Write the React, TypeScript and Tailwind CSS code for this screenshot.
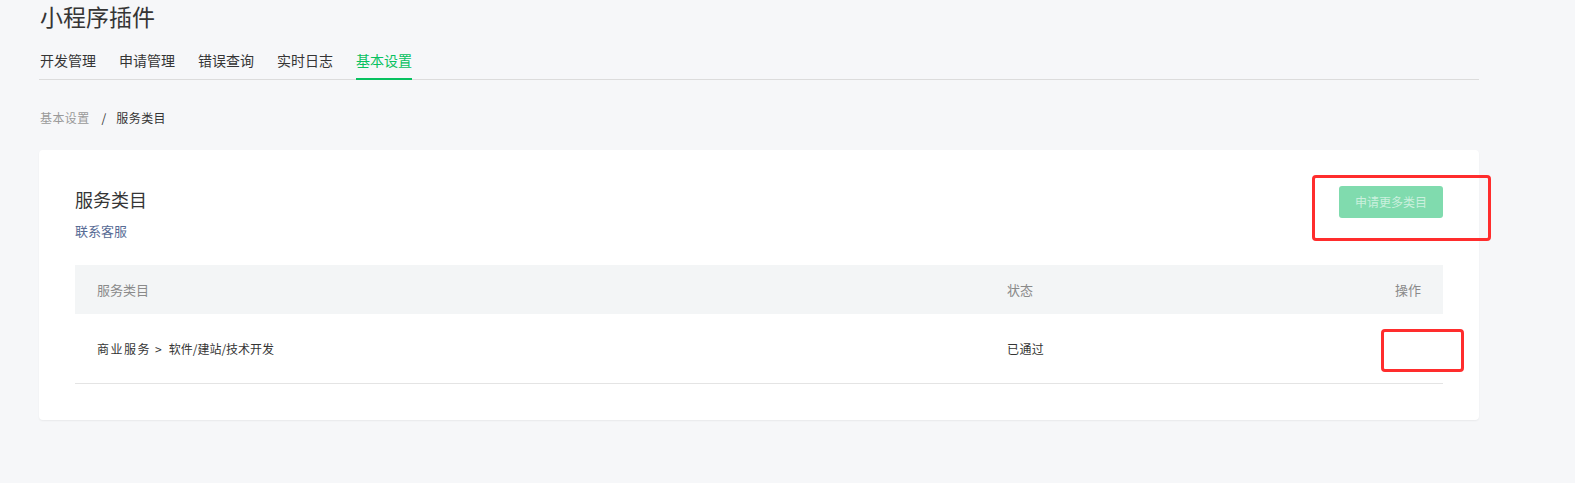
const tabs = ["开发管理", "申请管理", "错误查询", "实时日志", "基本设置"]

export default function App() {
  return (
    <div
      className="relative min-h-[483px] w-full bg-[#f6f7f9] text-[#353535]"
      style={{ fontFamily: '"Noto Sans CJK SC", "Noto Sans", sans-serif' }}
    >
      <div className="ml-[39px] w-[1440px]">
        <h1 className="pl-px pt-[1px] text-[23px] leading-[30px] text-[#353535]">小程序插件</h1>

        <div className="mt-[17px] flex gap-[23px] border-b border-[#dcdcdc] pl-px">
          {tabs.map((t, i) => (
            <div
              key={t}
              className={
                i === 4
                  ? "-mb-px border-b-2 border-[#07c160] pb-[5px] text-[14px] leading-[24px] text-[#07c160]"
                  : "pb-[7px] text-[14px] leading-[24px] text-[#353535]"
              }
            >
              {t}
            </div>
          ))}
        </div>

        <div className="mt-[28px] flex items-center pl-px text-[12px] leading-[20px]">
          <span className="text-[#9a9a9a] tracking-[0.4px]">基本设置</span>
          <span className="ml-[12px] mr-[10px] text-[#353535]">/</span>
          <span className="text-[#353535] tracking-[0.4px]">服务类目</span>
        </div>

        <div className="mt-[22px] rounded-[4px] bg-white px-[36px] pb-[36px] pt-[36px] shadow-[0_1px_2px_rgba(0,0,0,0.06)]">
          <div className="flex items-start justify-between">
            <div>
              <div className="text-[18px] leading-[26px] text-[#353535]">服务类目</div>
              <a className="mt-[10px] block text-[13px] leading-[18px] text-[#576b95]">联系客服</a>
            </div>
            <button className="h-[32px] w-[104px] rounded-[3px] bg-[#80dbae] text-[12px] text-white/60">
              申请更多类目
            </button>
          </div>

          <div className="mt-[25px]">
            <div className="flex h-[49px] items-center bg-[#f3f5f6] px-[22px] text-[13px] text-[#8a8a8a]">
              <div className="flex-1">服务类目</div>
              <div className="w-[294px]">状态</div>
              <div className="w-[120px] text-right">操作</div>
            </div>
            <div className="flex h-[70px] items-center border-b border-[#e4e4e4] px-[22px] text-[12px] text-[#353535]">
              <div className="flex flex-1 items-center">
                <span className="tracking-[1.5px]">商业服务</span>
                <span className="ml-[4px] mr-[7px]">&gt;</span>
                <span>软件/建站/技术开发</span>
              </div>
              <div className="w-[294px] tracking-[0.4px]">已通过</div>
              <div className="w-[120px]" />
            </div>
          </div>
        </div>
      </div>

      {/* annotation boxes */}
      <div className="absolute left-[1312px] top-[175px] h-[66px] w-[179px] rounded-[4px] border-[3px] border-[#ff2d2d]" />
      <div className="absolute left-[1381px] top-[329px] h-[43px] w-[83px] rounded-[4px] border-[3px] border-[#ff2d2d]" />
    </div>
  )
}
